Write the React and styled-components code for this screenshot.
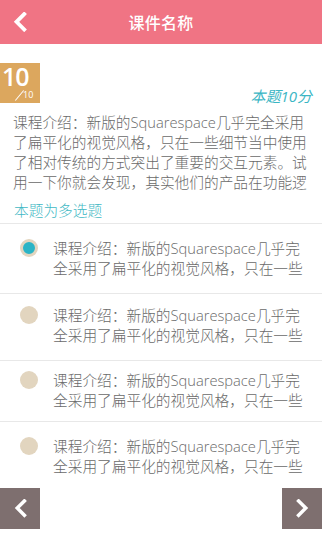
import React from "react";
import styled, { createGlobalStyle } from "styled-components";

const GlobalStyle = createGlobalStyle`
  html, body {
    margin: 0;
    padding: 0;
    background: #ffffff;
  }
  body {
    font-family: "Open Sans", "Noto Sans CJK SC", sans-serif;
  }
`;

const Page = styled.div`
  width: 322px;
  height: 551px;
  background: #ffffff;
  display: flex;
  flex-direction: column;
  overflow: hidden;
`;

const Header = styled.header`
  height: 44px;
  background: #f07484;
  display: flex;
  align-items: center;
  justify-content: center;
  position: relative;
  flex-shrink: 0;
`;

const BackBtn = styled.div`
  position: absolute;
  left: 13px;
  top: 12px;
  width: 20px;
  height: 22px;
  display: flex;
`;

const Title = styled.h1`
  margin: 0;
  color: #ffffff;
  font-size: 16px;
  font-weight: 500;
  letter-spacing: 0.3px;
`;

const TopRow = styled.div`
  margin-top: 19px;
  display: flex;
  justify-content: space-between;
  align-items: flex-end;
  padding-right: 10px;
`;

const Badge = styled.div`
  width: 40px;
  height: 40px;
  background: #dca75e;
  color: #ffffff;
  position: relative;
  font-family: "Open Sans", sans-serif;
`;

const BadgeNum = styled.span`
  position: absolute;
  left: 2px;
  top: -4px;
  font-size: 25px;
  font-weight: 600;
  letter-spacing: -1px;
`;

const BadgeTotal = styled.span`
  position: absolute;
  left: 23px;
  top: 25px;
  font-size: 9px;
  font-weight: 500;
`;

const Slash = styled.span`
  position: absolute;
  left: 19px;
  top: 26px;
  width: 1px;
  height: 13px;
  background: #ffffff;
  transform: rotate(40deg);
`;

const Score = styled.span`
  color: #3bb6c4;
  font-style: italic;
  font-size: 15px;
  line-height: 20px;
  margin-bottom: -3px;
`;

const Intro = styled.p`
  margin: 9px 10px 0 13px;
  color: #6a6a6a;
  font-size: 14.7px;
  font-weight: 300;
  line-height: 20px;
  max-height: 80px;
  overflow: hidden;
`;

const Kind = styled.div`
  margin: 8px 0 0 14px;
  color: #3fb8c4;
  font-size: 14.7px;
  font-weight: 300;
  line-height: 20px;
  padding-bottom: 3px;
`;

const Options = styled.ul`
  list-style: none;
  margin: 0;
  padding: 0;
  border-top: 1px solid #e8e8e8;
`;

const Option = styled.li`
  display: flex;
  align-items: flex-start;
  padding: ${(p) => p.$pt}px 12px ${(p) => p.$pb}px 20px;
  border-bottom: ${(p) => (p.$last ? "none" : "1px solid #e8e8e8")};
`;

const Radio = styled.span`
  width: 18px;
  height: 18px;
  box-sizing: border-box;
  border-radius: 50%;
  flex-shrink: 0;
  margin-top: 1px;
  background: ${(p) => (p.$checked ? "#2bb4c6" : "#e2d5bf")};
  border: ${(p) => (p.$checked ? "3px solid #e2d5bf" : "none")};
`;

const OptionText = styled.span`
  margin-left: 15px;
  color: #6a6a6a;
  font-size: 14.7px;
  font-weight: 300;
  line-height: 20px;
  max-height: 40px;
  overflow: hidden;
`;

const Footer = styled.div`
  margin-top: auto;
  margin-bottom: 22px;
  display: flex;
  justify-content: space-between;
`;

const NavBtn = styled.div`
  width: 40px;
  height: 41px;
  background: #7e6f6f;
  display: flex;
  align-items: center;
  justify-content: center;
`;

const Chevron = ({ dir = "left", size = 14, stroke = 3.5 }) => (
  <svg width={size} height={size * 1.4} viewBox="0 0 10 14">
    <polyline
      points={dir === "left" ? "8,1.5 2.5,7 8,12.5" : "2,1.5 7.5,7 2,12.5"}
      fill="none"
      stroke="#ffffff"
      strokeWidth={stroke * (10 / size)}
      strokeLinecap="square"
    />
  </svg>
);

const text =
  "课程介绍：新版的Squarespace几乎完全采用了扁平化的视觉风格，只在一些细节当中使用了相对传统的方式突出了重要的交互元素。试用一下你就会发现，其实他们的产品在功能逻辑上也做了很多的优化。";

const optionText =
  "课程介绍：新版的Squarespace几乎完全采用了扁平化的视觉风格，只在一些细节当中使用";

const options = [
  { checked: true, pt: 14, pb: 15 },
  { checked: false, pt: 11, pb: 15 },
  { checked: false, pt: 9, pb: 11 },
  { checked: false, pt: 14, pb: 10 },
];

export default function App() {
  return (
    <Page>
      <GlobalStyle />
      <Header>
        <BackBtn>
          <Chevron dir="left" size={14} stroke={3.8} />
        </BackBtn>
        <Title>课件名称</Title>
      </Header>

      <TopRow>
        <Badge>
          <BadgeNum>10</BadgeNum>
          <Slash />
          <BadgeTotal>10</BadgeTotal>
        </Badge>
        <Score>本题10分</Score>
      </TopRow>

      <Intro>{text}</Intro>
      <Kind>本题为多选题</Kind>

      <Options>
        {options.map((o, i) => (
          <Option key={i} $pt={o.pt} $pb={o.pb} $last={i === options.length - 1}>
            <Radio $checked={o.checked} />
            <OptionText>{optionText}</OptionText>
          </Option>
        ))}
      </Options>

      <Footer>
        <NavBtn>
          <Chevron dir="left" size={13} stroke={3.5} />
        </NavBtn>
        <NavBtn>
          <Chevron dir="right" size={13} stroke={3.5} />
        </NavBtn>
      </Footer>
    </Page>
  );
}
